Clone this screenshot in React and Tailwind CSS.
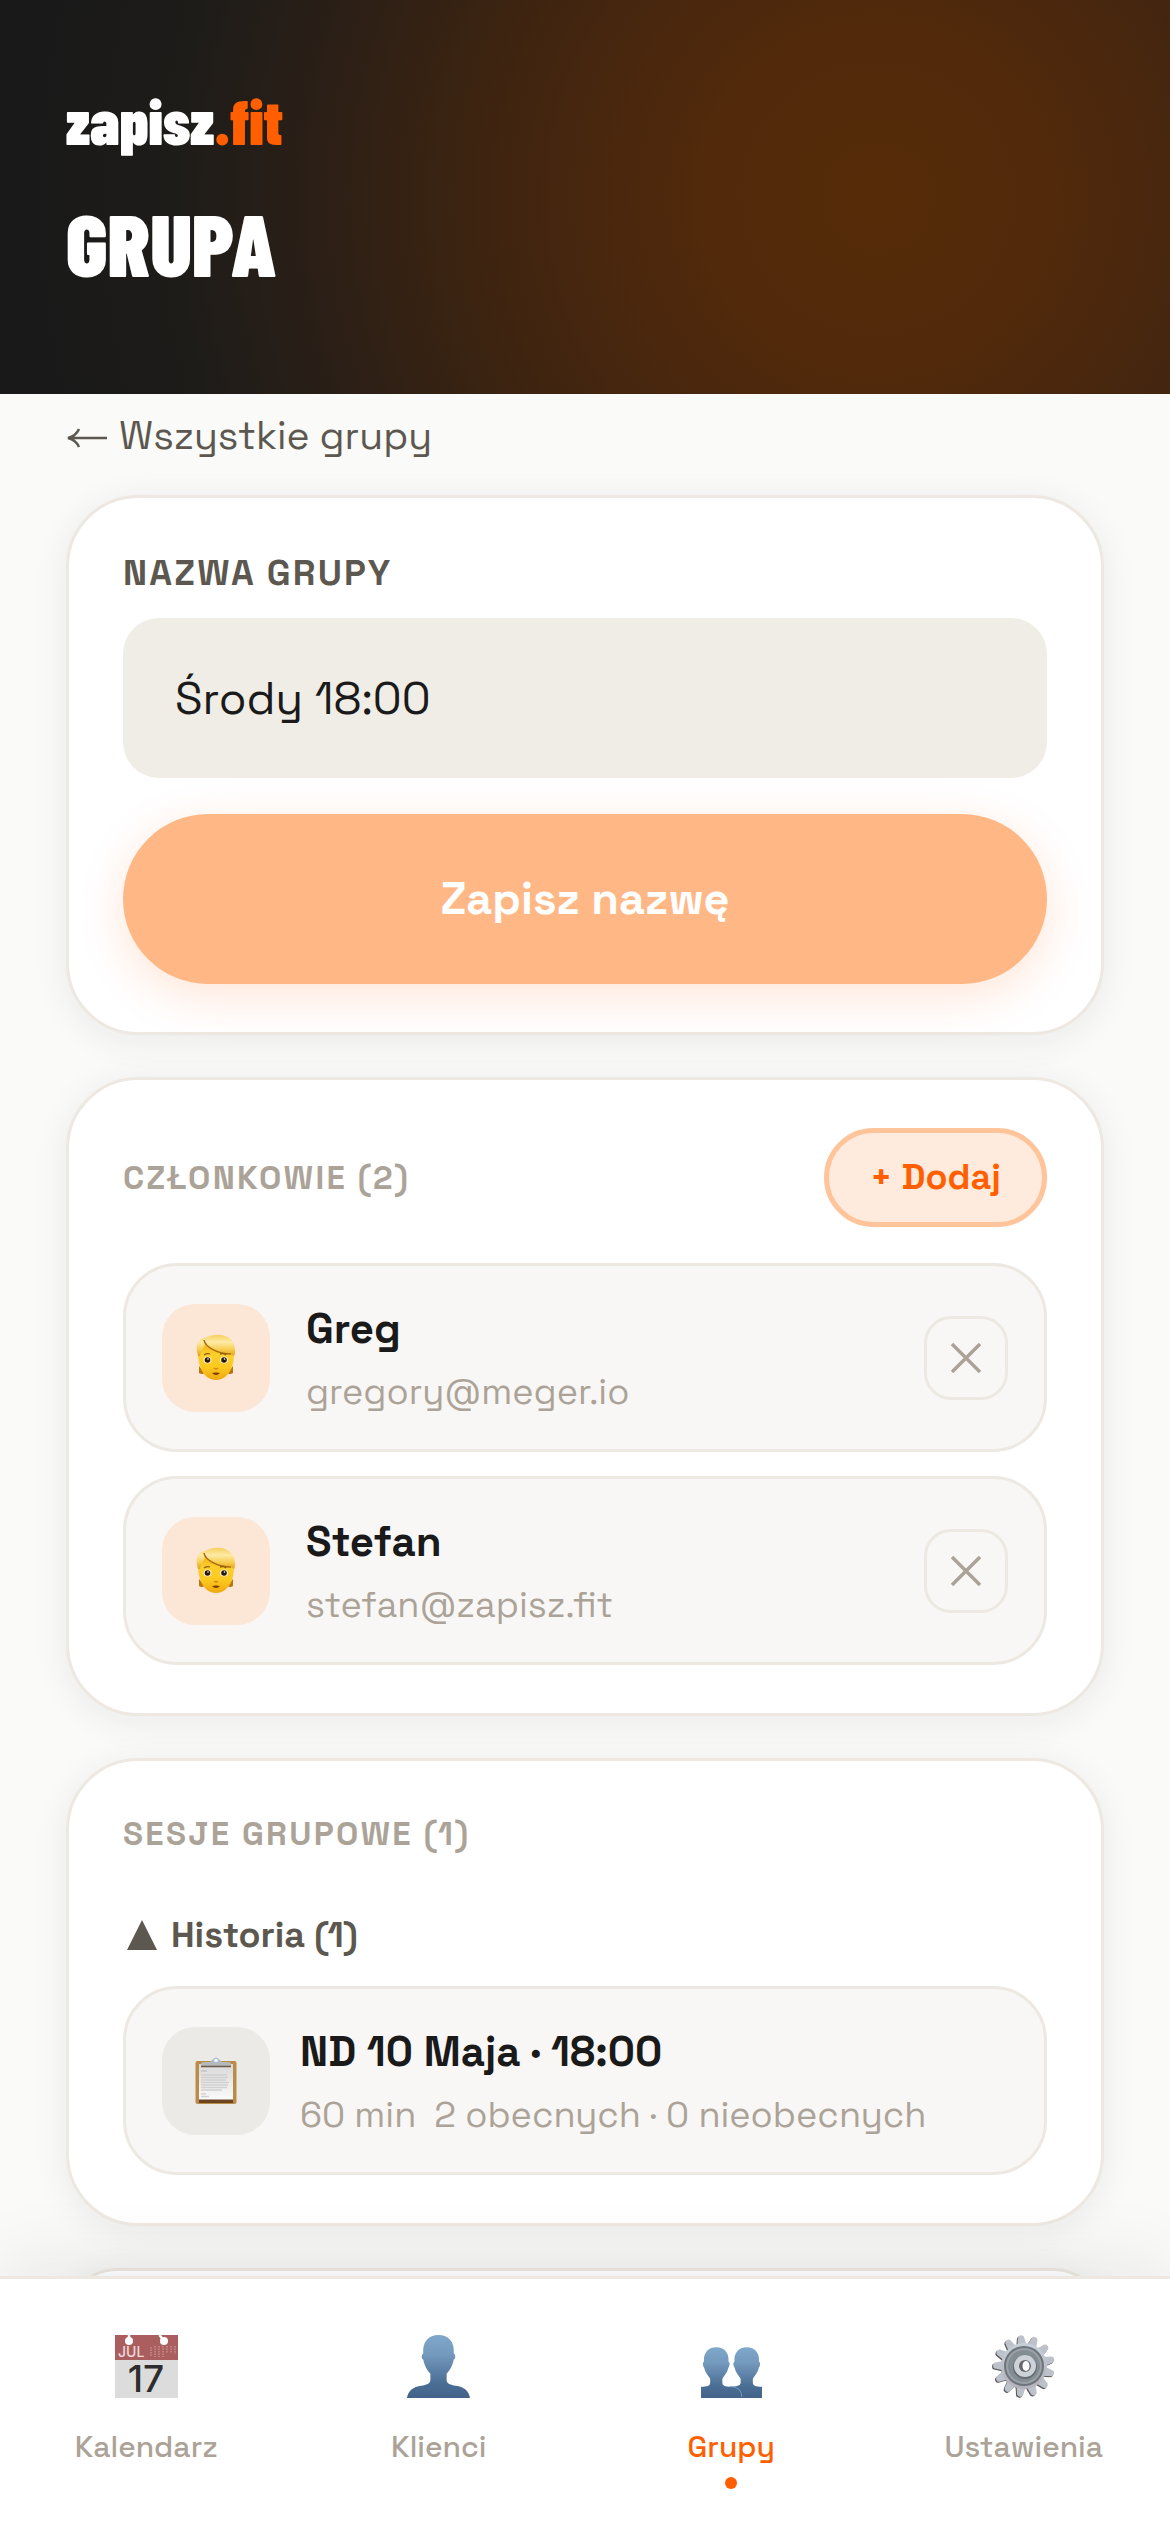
import React from "react";

const members = [
  { name: "Greg", email: "gregory@meger.io" },
  { name: "Stefan", email: "stefan@zapisz.fit" },
];

const PersonFace = () => (
  <svg viewBox="0 0 40 47" className="w-10" aria-hidden="true">
    <defs>
      <linearGradient id="face" x1="0" y1="0" x2="0" y2="1">
        <stop offset="0" stopColor="#e9a815" />
        <stop offset="0.4" stopColor="#fdcf2b" />
        <stop offset="0.7" stopColor="#fcc81f" />
        <stop offset="1" stopColor="#eea80f" />
      </linearGradient>
      <linearGradient id="hair" x1="0" y1="0" x2="0" y2="1">
        <stop offset="0" stopColor="#f6cf5c" />
        <stop offset="0.35" stopColor="#fdeaa6" />
        <stop offset="0.7" stopColor="#f7cd4e" />
        <stop offset="1" stopColor="#e2a01a" />
      </linearGradient>
    </defs>
    <path d="M3 32v7q3 2 6 0zM37 32v7q-3 2-6 0z" fill="#b87514" />
    <path d="M2 18C2 8 9 4 20 4s18 4 18 15c0 13-4 20-9 24-5 4-13 4-18 0-5-4-9-12-9-25z" fill="url(#face)" />
    <path d="M2 22C-1 12 1 5 9 4c9-6 30-5 30 12 0 3 0 4-1 6l-3-2C26 20 15 16 9 9c0 4-4 7-5 13z" fill="url(#hair)" />
    <path d="M8 6c1 7 14 14 27 14" fill="none" stroke="#a8690e" strokeWidth="1.5" />
    <path d="M8 21q3-2 6-1M24 20q4-1 6 1" fill="none" stroke="#8f5a12" strokeWidth="1.3" />
    <ellipse cx="11.500" cy="26" rx="4" ry="3.500" fill="#fff3cf" />
    <ellipse cx="28" cy="26" rx="4" ry="3.500" fill="#fff3cf" />
    <circle cx="11.500" cy="26" r="2.800" fill="#2c1608" />
    <circle cx="28" cy="26" r="2.800" fill="#2c1608" />
    <circle cx="12" cy="25" r="0.8" fill="#fff" />
    <circle cx="28.500" cy="25" r="0.8" fill="#fff" />
    <path d="M18 34q2 2 4 0" fill="none" stroke="#d58d10" strokeWidth="1.5" />
    <path d="M16 39q4-1 8 0-4 4-8 0z" fill="#7b3a0a" />
  </svg>
);

const Clipboard = () => (
  <svg viewBox="0 0 42 48" className="w-[42px]" aria-hidden="true">
    <defs>
      <linearGradient id="paper" x1="0" y1="0" x2="0" y2="1">
        <stop offset="0" stopColor="#d9d9d9" />
        <stop offset="1" stopColor="#fafafa" />
      </linearGradient>
    </defs>
    <rect x="0.5" y="4" width="41" height="43" rx="2" fill="#b98c48" />
    <rect x="4" y="42" width="34" height="4" fill="#6b4420" />
    <rect x="4" y="7" width="34" height="35.5" fill="url(#paper)" />
    <path d="M6 14h6" stroke="#b5b5b5" />
    <path d="M6 18h26M6 20.500h27M6 23h25M6 25.500h28M6 28h27M6 30.500h26M6 33h21M6 37h5M6 39.500h8" stroke="#d0d0d0" strokeWidth="1.500" />
    <path d="M6 9V7q0-2 3-2h6q2-3 6-3t6 3h6q3 0 3 2v2z" fill="#b4b8ba" />
    <path d="M6 9.500h30" stroke="#6a5a48" strokeWidth="1.5" />
    <circle cx="21" cy="3.500" r="2.5" fill="#f0f0f0" stroke="#9fb2cf" />
  </svg>
);

const CalendarIcon = () => (
  <svg viewBox="0 0 63 63" className="size-[63px] overflow-visible" aria-hidden="true">
    <rect width="63" height="63" fill="#dcdcdc" />
    <rect width="63" height="25" fill="#aa5e5e" />
    <circle cx="14" cy="6" r="4" fill="#fff" />
    <circle cx="49" cy="6" r="4" fill="#fff" />
    <path d="M14 0v5M44.500 0l3 4" stroke="#fff" strokeWidth="2.500" />
    <path d="M36 12v10M40 11v11M44 11v11M48 11v11M52 11v7M56 11v7M60 11v8" stroke="#c78d8d" strokeWidth="1.500" strokeDasharray="1.500 1" />
    <text x="3" y="21.500" fill="#eddada" className="font-['Inter',sans-serif] text-[14px]">
      JUL
    </text>
    <text x="31" y="57" textAnchor="middle" fill="#2e2e2e" className="font-['Inter',sans-serif] text-[37px] leading-none font-medium">
      17
    </text>
  </svg>
);

const silhouette =
  "M16 24c-2 0-2-5 0-6C15 7 21 0 31 0s16 7 15 18c2 1 2 6 0 6-1 6-4 11-7 14v6c0 4 4 5 9 6 8 1 13 5 14 12H0c1-7 6-11 14-12 5-1 9-2 9-6v-6c-3-3-6-8-7-14z";

const BlueGradient = ({ id }) => (
  <linearGradient id={id} x1="0" y1="0" x2="0" y2="1">
    <stop offset="0" stopColor="#7fa8cb" />
    <stop offset="0.3" stopColor="#749abd" />
    <stop offset="0.75" stopColor="#4c6f96" />
    <stop offset="1" stopColor="#436389" />
  </linearGradient>
);

const ClientIcon = () => (
  <svg viewBox="0 0 62 62" className="size-[63px]" aria-hidden="true">
    <defs>
      <BlueGradient id="one" />
    </defs>
    <path d={silhouette} fill="url(#one)" />
  </svg>
);

const GroupIcon = () => (
  <svg viewBox="0 0 62 62" className="size-[63px]" aria-hidden="true">
    <defs>
      <BlueGradient id="two" />
    </defs>
    <path
      d="M46 12c8 0 13 6 12 14 2 1 1 5 0 6-1 5-4 8-6 11v4c0 3 3 4 9 4v11H29V51c6 0 11-1 11-4v-4c-2-3-5-6-6-11-1-1-2-5 0-6-1-8 4-14 12-14z"
      fill="url(#two)"
    />
    <path
      d="M16 12c8 0 13 6 12 14 2 1 1 5 0 6-1 5-4 8-6 11v4c0 3 3 4 8 4 7 0 11 4 11 11H1V51c6 0 9-1 9-4v-4c-2-3-5-6-6-11-1-1-2-5 0-6-1-8 4-14 12-14z"
      fill="url(#two)"
    />
    <path d="M30 51c7 0 11 4 11 10" fill="none" stroke="#6b9cc0" />
  </svg>
);

const teeth = [0, 1, 2, 3, 4, 5, 6, 7, 8, 9, 10, 11, 12];

const Teeth = ({ fill }) =>
  teeth.map((i) => (
    <path
      key={i}
      d="M27 12l2-10q.5-2 3-2t3 2l2 10z"
      fill={fill}
      transform={`rotate(${(i * 360) / 13 - 6} 32 31)`}
    />
  ));

const SettingsIcon = () => (
  <svg viewBox="0 0 63 63" className="size-[63px] overflow-visible" aria-hidden="true">
    <defs>
      <linearGradient id="steel" x1="0" y1="0" x2="0" y2="1">
        <stop offset="0" stopColor="#c6d0d8" />
        <stop offset="1" stopColor="#b3b0ba" />
      </linearGradient>
    </defs>
    <g transform="translate(-1 1)">
      <Teeth fill="#5c5a58" />
      <circle cx="32" cy="31" r="22" fill="#5c5a58" />
    </g>
    <Teeth fill="#bcc1ca" />
    <circle cx="32" cy="31" r="23" fill="url(#steel)" />
    <circle cx="32" cy="31" r="20" fill="#6d747b" />
    <circle cx="32" cy="31" r="17" fill="#858d94" stroke="#9aa2a8" strokeWidth="2" />
    <circle cx="33" cy="32" r="12" fill="#666b72" />
    <circle cx="33" cy="31" r="11" fill="#cdd2d9" />
    <circle cx="33" cy="31" r="6" fill="#63676c" />
    <ellipse cx="34" cy="31" rx="3.500" ry="5" fill="#fff" />
  </svg>
);

const tabs = [
  { label: "Kalendarz", icon: <CalendarIcon /> },
  { label: "Klienci", icon: <ClientIcon /> },
  { label: "Grupy", icon: <GroupIcon />, active: true },
  { label: "Ustawienia", icon: <SettingsIcon /> },
];

const Card = ({ children }) => (
  <section className="rounded-[72px] border-3 border-[#ede8e1] bg-white px-[54px] py-12 shadow-[0_6px_36px_rgba(26,26,26,0.07)]">
    {children}
  </section>
);

const App = () => {
  return (
    <div className="flex h-screen flex-col overflow-hidden bg-[#fafaf8] font-['Space_Grotesk','Inter',sans-serif] text-[#1a1a1a]">
      <header className="shrink-0 bg-[radial-gradient(circle_at_75%_50%,#562c08,#51290b_20%,#46260f_35%,#3a2311_48%,#2b1f17_63%,#1e1c19_78%,#191919_94%)] px-[66px] pt-[78px] pb-[106px] font-['Barlow_Condensed','Roboto_Condensed','Open_Sans_Condensed',sans-serif] font-black text-white">
        <a href="#start" className="block text-[63px] leading-[84px]">
          zapisz<span className="text-[#ff5f00]">.fit</span>
        </a>
        <h1 className="mt-[34px] text-[87px] leading-[92px]">GRUPA</h1>
      </header>

      <main className="min-h-0 flex-1 overflow-y-auto px-[66px] [scrollbar-width:none]">
        <a href="#grupy" className="flex h-[101px] items-start gap-3 pt-3 text-[39px] leading-[60px] text-[#5c5850]">
          <svg viewBox="0 0 41 60" className="h-[60px] w-[41px]" aria-hidden="true">
            <path d="M2 32h39M13 23q-3 7-11 9 8 2 11 9" fill="none" stroke="#5c5850" strokeWidth="2.500" />
          </svg>
          Wszystkie grupy
        </a>

        <div className="flex flex-col gap-[42px]">
          <Card>
            <form>
              <label htmlFor="group-name" className="block text-[36px] leading-[54px] font-semibold tracking-[0.06em] text-[#5c5850]">
                NAZWA GRUPY
              </label>
              <input
                id="group-name"
                type="text"
                defaultValue="Środy 18:00"
                className="mt-[18px] block h-40 w-full rounded-[36px] bg-[#f0ede6] px-[52px] text-[45px]"
              />
              <button
                type="button"
                className="mt-9 h-[170px] w-full rounded-full bg-[#ffb885] text-[45px] font-bold text-white shadow-[0_12px_48px_rgba(255,95,0,0.16)]"
              >
                Zapisz nazwę
              </button>
            </form>
          </Card>

          <Card>
            <div className="flex items-center justify-between">
              <h2 className="text-[33px] leading-[50px] font-semibold tracking-[0.07em] text-[#aba398]">
                CZŁONKOWIE (2)
              </h2>
              <button
                type="button"
                className="rounded-full border-5 border-[#ffc49a] bg-[#ffebde] px-[41px] py-[17px] text-[36px] leading-[55px] font-bold text-[#ff5f00]"
              >
                + Dodaj
              </button>
            </div>
            <ul className="mt-9 flex flex-col gap-6">
              {members.map((member) => (
                <li
                  key={member.email}
                  className="flex items-center gap-9 rounded-[54px] border-3 border-[#ede8e1] bg-[#f9f7f5] px-9 py-[30px]"
                >
                  <div className="flex size-[108px] items-center justify-center rounded-[33px] bg-[#fce6d6]">
                    <PersonFace />
                  </div>
                  <div className="flex flex-1 flex-col gap-[3px]">
                    <span className="text-[42px] leading-[66px] font-semibold">{member.name}</span>
                    <span className="text-[36px] leading-[54px] text-[#aba398]">{member.email}</span>
                  </div>
                  <button
                    type="button"
                    aria-label={`Usuń ${member.name}`}
                    className="flex size-[84px] items-center justify-center rounded-[27px] border-3 border-[#ede8e1]"
                  >
                    <svg viewBox="0 0 30 30" className="size-[30px]" aria-hidden="true">
                      <path d="M1 1l28 28M29 1L1 29" stroke="#aba398" strokeWidth="3.500" />
                    </svg>
                  </button>
                </li>
              ))}
            </ul>
          </Card>

          <Card>
            <h2 className="text-[33px] leading-[50px] font-semibold tracking-[0.07em] text-[#aba398]">
              SESJE GRUPOWE (1)
            </h2>
            <button type="button" className="mt-9 mb-3 flex h-[79px] items-center gap-[14px] pl-1 text-[36px] font-semibold text-[#5c5850]">
              <svg viewBox="0 0 30 30" className="size-[30px]" aria-hidden="true">
                <path d="M15 0l15 30H0z" fill="#5c5850" />
              </svg>
              Historia (1)
            </button>
            <div className="flex items-center gap-[30px] rounded-[54px] border-3 border-[#ede8e1] bg-[#f9f7f5] px-9 py-[30px]">
              <div className="flex size-[108px] items-center justify-center rounded-[33px] bg-[#ebeae6]">
                <Clipboard />
              </div>
              <div className="flex flex-1 flex-col gap-[3px]">
                <span className="text-[42px] leading-[66px] font-bold">ND 10 Maja · 18:00</span>
                <span className="flex gap-[18px] text-[36px] leading-[54px] text-[#aba398]">
                  <span>60 min</span>
                  <span>2 obecnych · 0 nieobecnych</span>
                </span>
              </div>
            </div>
          </Card>

          <Card />
        </div>
      </main>

      <nav className="relative z-10 grid h-[256px] shrink-0 grid-cols-4 border-t-3 border-[#ede8e1] bg-white shadow-[0_-12px_72px_rgba(26,26,26,0.08)]">
        {tabs.map((tab) => (
          <a
            key={tab.label}
            href={`#${tab.label.toLowerCase()}`}
            className={`flex flex-col items-center pt-14 text-[30px] leading-[45px] font-medium ${
              tab.active ? "text-[#ff5f00]" : "text-[#aba398]"
            }`}
          >
            {tab.icon}
            <span className="mt-[26px]">{tab.label}</span>
            {tab.active && <span className="mt-2 size-3 rounded-full bg-[#ff5f00]" />}
          </a>
        ))}
      </nav>
    </div>
  );
};

export default App;
